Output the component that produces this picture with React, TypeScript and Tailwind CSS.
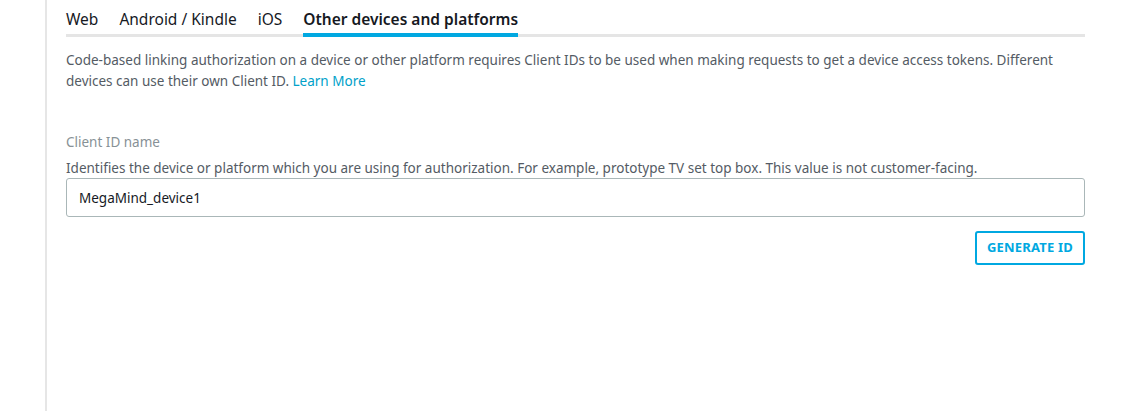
import React, { useState } from 'react';

const tabs = ['Web', 'Android / Kindle', 'iOS', 'Other devices and platforms'];

export default function App() {
  const [active, setActive] = useState(3);
  const [name, setName] = useState('MegaMind_device1');

  return (
    <div className="flex min-h-[411px] w-full bg-white font-['Noto_Sans',sans-serif]">
      <div className="w-[47px] shrink-0 border-r-2 border-[#e6e6e6]" />
      <div className="w-[1038px] pl-[19px]">
        <div className="flex gap-[21px] border-b-[3px] border-[#e5e5e5] pt-[8px]">
          {tabs.map((t, i) => (
            <button
              key={t}
              onClick={() => setActive(i)}
              className={`-mb-[3px] border-b-4 pb-[3px] text-[15.5px] leading-[22px] ${
                i === active ? 'border-[#00a8e1] font-semibold text-[#16191f]' : 'border-transparent text-[#16191f]'
              }`}
            >
              {t}
            </button>
          ))}
        </div>

        <p className="mt-[13px] text-[13.5px] leading-[21px] text-[#545b64]">
          Code-based linking authorization on a device or other platform requires Client IDs to be used when making requests to get a device access tokens. Different devices can use their own Client ID.{' '}
          <a href="#" className="text-[#00a1c9]">Learn More</a>
        </p>

        <div className="mt-[41px] text-[13.5px] leading-[18px] text-[#879196]">Client ID name</div>
        <div className="mt-[8px] text-[13.5px] leading-[18px] text-[#545b64]">
          Identifies the device or platform which you are using for authorization. For example, prototype TV set top box. This value is not customer-facing.
        </div>
        <input
          value={name}
          onChange={(e) => setName(e.target.value)}
          className="mt-[1px] h-[39px] w-full rounded-[3px] border border-[#aab7b8] px-[12px] text-[13.5px] text-[#16191f] outline-none"
        />
        <div className="mt-[14px] flex justify-end">
          <button className="h-[34px] rounded-[3px] border-2 border-[#00a8e1] px-[10px] text-[13px] font-bold tracking-[0.2px] text-[#00a8e1]">
            GENERATE ID
          </button>
        </div>
      </div>
    </div>
  );
}
